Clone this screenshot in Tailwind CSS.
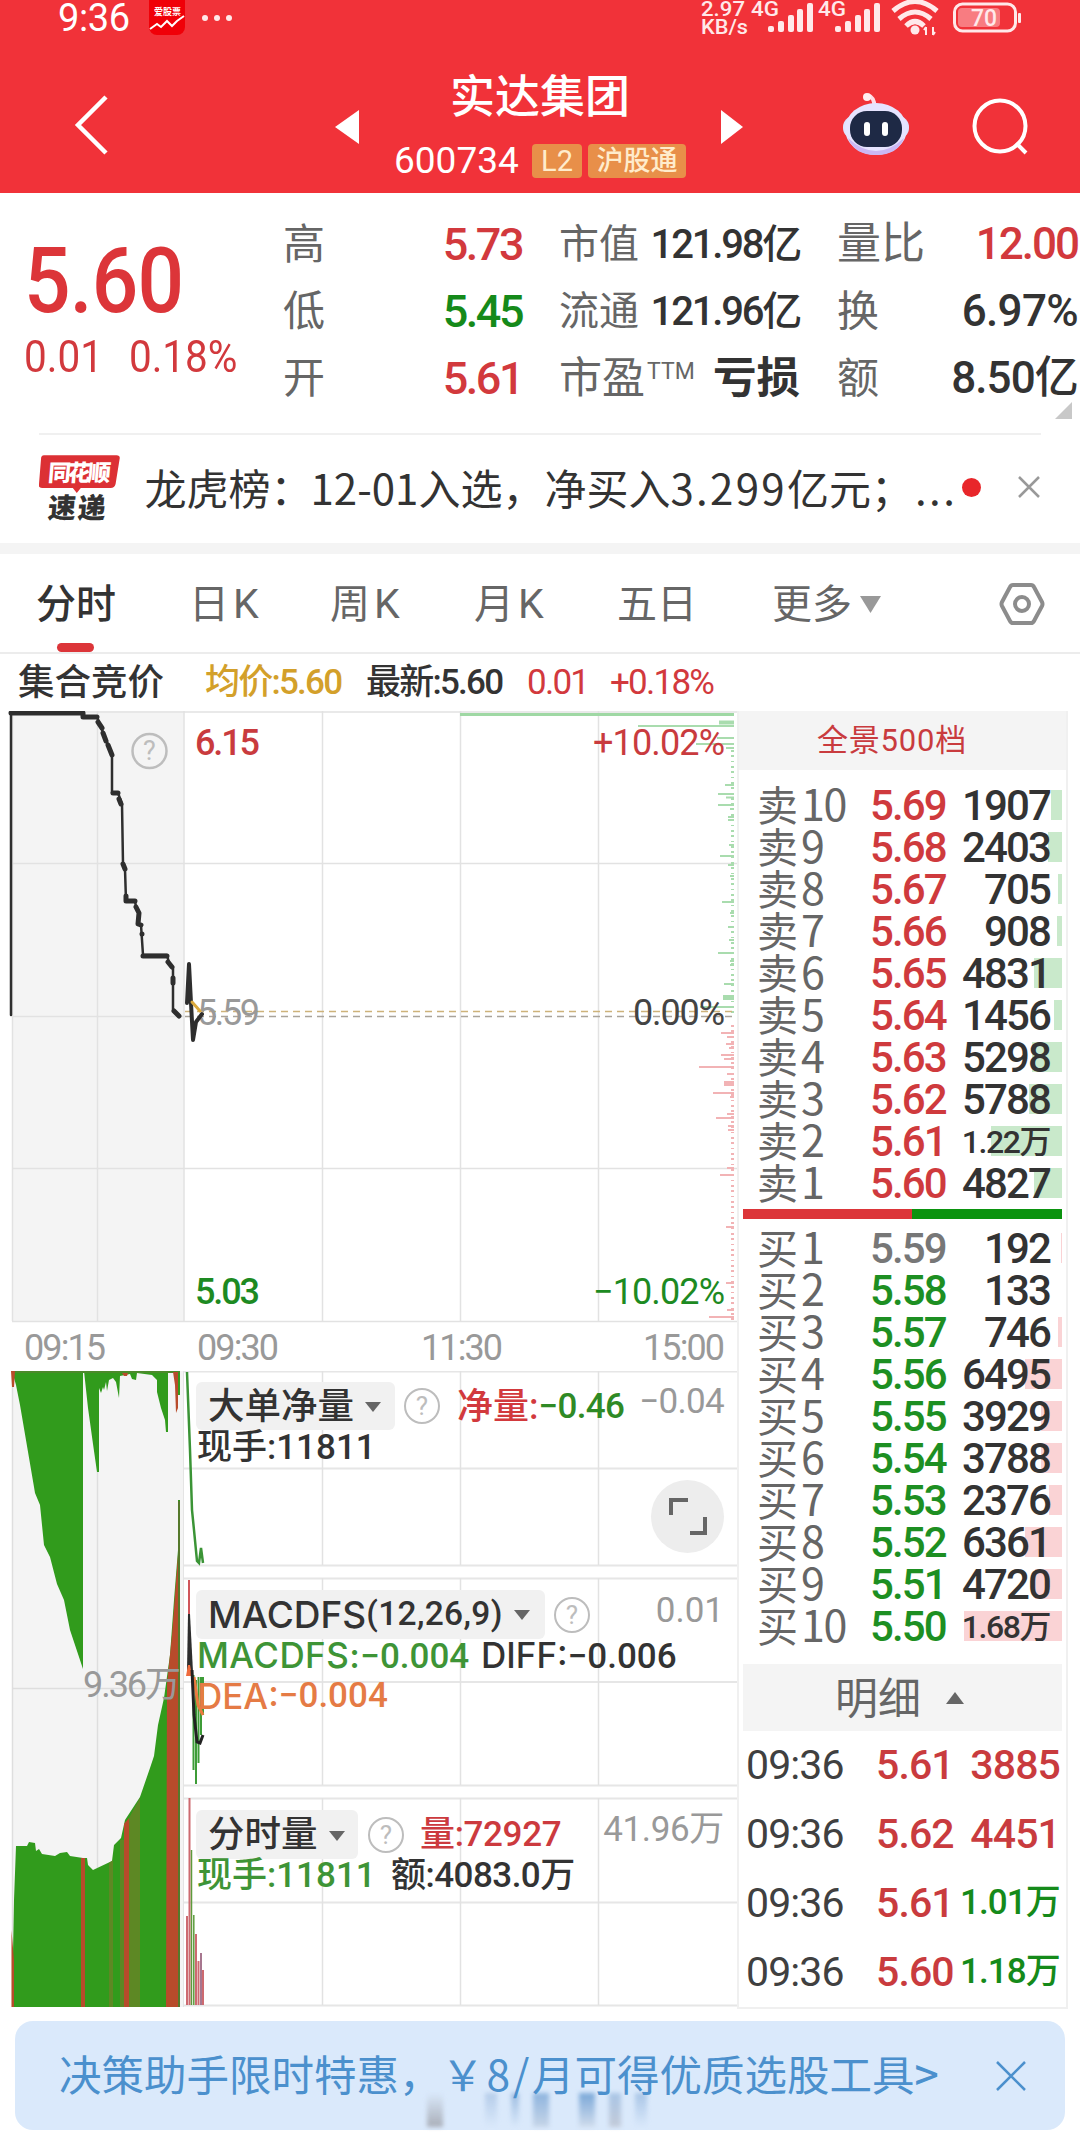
<!DOCTYPE html>
<html lang="zh-CN">
<head>
    <meta charset="UTF-8">
    <meta name="viewport" content="width=device-width, initial-scale=1.0">
    <title>实达集团 600734</title>
    <script src="https://cdn.jsdelivr.net/npm/@tailwindcss/browser@4"></script>
</head>
<body class="w-[1080px] h-[2138px] bg-white text-[#333] overflow-hidden font-['Roboto','Noto_Sans_CJK_SC',sans-serif]">

<!-- Header -->
<header class="h-[193px] bg-[#f13239] text-white">
    <div class="h-9 flex items-center justify-between pl-[58px] pr-[58px]">
        <div class="flex items-center">
            <span class="text-[38px] leading-9 tracking-[-0.01em]">9:36</span>
            <svg class="ml-[19px]" width="36" height="36" viewBox="0 0 36 36">
                <rect y="-8" width="36" height="43" rx="8" fill="#f00008"/>
                <text x="5" y="15" font-size="9" font-weight="700" fill="#fff" textLength="27">爱股票</text>
                <path d="M1 29l7-5 4 3 6-6 5 5 5-5 7-5" fill="none" stroke="#fff" stroke-width="2"/>
            </svg>
            <svg class="ml-4" width="34" height="8"><g fill="#ffe9ea"><circle cx="4" cy="4" r="3"/><circle cx="16" cy="4" r="3"/><circle cx="28" cy="4" r="3"/></g></svg>
        </div>
        <svg width="322" height="36" viewBox="700 0 322 36" fill="#ffe9ea">
            <g font-size="21" font-weight="500">
                <text x="701" y="16" textLength="44" lengthAdjust="spacingAndGlyphs">2.97</text>
                <text x="701" y="34" textLength="47" lengthAdjust="spacingAndGlyphs">KB/s</text>
                <text x="751" y="16" textLength="28" lengthAdjust="spacingAndGlyphs">4G</text>
                <text x="818" y="16" textLength="28" lengthAdjust="spacingAndGlyphs">4G</text>
            </g>
            <g id="bars">
                <rect x="768" y="26" width="6" height="6" rx="2"/><rect x="778" y="21" width="6" height="11" rx="2"/><rect x="788" y="15" width="6" height="17" rx="2"/><rect x="797" y="9" width="6" height="23" rx="2"/><rect x="807" y="3" width="6" height="29" rx="2"/>
            </g>
            <use href="#bars" x="67"/>
            <g fill="none" stroke="#ffe9ea" stroke-width="5">
                <path d="M893 11Q915-8 937 11M899 19Q915 5 931 19M906 26Q915 17 924 26"/>
            </g>
            <circle cx="915" cy="30" r="4.5"/>
            <path d="M926 27v8m0-8l-2 3M933 35v-8m0 8l2-3" stroke="#ffe9ea" stroke-width="2"/>
            <rect x="954.500" y="4" width="61" height="27" rx="8" fill="none" stroke="#ffe9ea" stroke-width="3"/>
            <rect x="958" y="8" width="42" height="19" rx="4" fill="#f87c81"/>
            <rect x="1018" y="13" width="3" height="10" rx="1"/>
            <text x="971" y="26" font-size="24" font-weight="500" textLength="26" lengthAdjust="spacingAndGlyphs">70</text>
        </svg>
    </div>
    <div class="h-[157px] flex items-start relative">
        <svg class="ml-[74px] mt-[59px]" width="36" height="60" fill="none" stroke="#fff" stroke-width="4.500"><path d="M32 2L4 30l28 28"/></svg>
        <svg class="ml-[225px] mt-[73px]" width="24" height="36"><path d="M24 1v34L0 18z" fill="#fff"/></svg>
        <div class="w-[362px] mt-8 flex flex-col items-center">
            <div class="text-[45px] leading-[60px] font-medium">实达集团</div>
            <div class="mt-[15px] flex items-center h-9">
                <span class="text-[37px] leading-9 w-[138px]">600734</span>
                <span class="w-[50px] h-[34px] rounded bg-[#e88f49] text-[#ffeccc] text-[29px] leading-[34px] text-center">L2</span>
                <span class="ml-[6px] w-[98px] h-[34px] rounded bg-[#e88f49] text-[#ffeccc] text-[27px] leading-[34px] text-center font-medium">沪股通</span>
            </div>
        </div>
        <svg class="mt-[73px]" width="24" height="36"><path d="M0 1v34L22 18z" fill="#fff"/></svg>
        <svg class="ml-[97px] mt-14" width="68" height="64" viewBox="0 0 68 64">
            <path d="M32 14q1-8-6-11" fill="none" stroke="#ffdce6" stroke-width="4"/><circle cx="25" cy="5" r="4" fill="#ffeef2"/>
            <rect x="1" y="24" width="66" height="23" rx="11" fill="#dfe3ff"/>
            <ellipse cx="34" cy="37" rx="31" ry="26" fill="#e6e4ff"/>
            <path d="M6 46q28 26 56 0-6 17-28 17T6 46z" fill="#cbb8f4"/>
            <rect x="8" y="19" width="52" height="36" rx="17" fill="#1e2945"/>
            <rect x="22" y="30" width="6" height="14" rx="3" fill="#fff"/><rect x="40" y="30" width="6" height="14" rx="3" fill="#fff"/>
        </svg>
        <svg class="ml-[61px] mt-[61px]" width="60" height="60" fill="none" stroke="#fff" stroke-width="4"><circle cx="29" cy="29" r="25.500"/><path d="M45 46l10 10"/></svg>
    </div>
</header>

<!-- Quote summary -->
<section class="h-[240px] flex relative pt-[18px]">
    <div class="w-[283px] pl-[24px] text-[#dc3539]">
        <div class="mt-[20px] w-[190px] text-[91px] leading-[100px] font-medium tracking-[-0.01em] origin-left scale-x-[0.9]">5.60</div>
        <div class="w-[250px] flex text-[44px] leading-[52px] text-[#d2393d] origin-left scale-x-[0.92]"><span class="w-[114px]">0.01</span><span>0.18%</span></div>
    </div>
    <div class="w-[239px] text-[45px] leading-[67px] font-medium tracking-[-0.055em]">
        <div class="flex justify-between"><span class="text-[42px] font-normal text-[#666]">高</span><span class="text-[#d2393d]">5.73</span></div>
        <div class="flex justify-between"><span class="text-[42px] font-normal text-[#666]">低</span><span class="text-[#158a1a]">5.45</span></div>
        <div class="flex justify-between"><span class="text-[42px] font-normal text-[#666]">开</span><span class="text-[#d2393d]">5.61</span></div>
    </div>
    <div class="ml-[37px] w-[241px] text-[40px] leading-[67px] tracking-[-0.055em]">
        <div class="flex justify-between"><span class="text-[#666] tracking-normal">市值</span><span class="font-medium">121.98亿</span></div>
        <div class="flex justify-between"><span class="text-[#666] tracking-normal">流通</span><span class="font-medium">121.96亿</span></div>
        <div class="flex justify-between tracking-normal"><span class="flex text-[#666] text-[43px]">市盈<span class="text-[23px] leading-[54px] ml-[2px]">TTM</span></span><span class="text-[43.5px] font-bold">亏损</span></div>
    </div>
    <div class="ml-[37px] w-[241px] text-[44px] leading-[67px] tracking-[-0.035em]">
        <div class="flex justify-between"><span class="text-[#666] tracking-normal">量比</span><span class="font-medium text-[#d2393d] tracking-[-0.045em]">12.00</span></div>
        <div class="flex justify-between"><span class="text-[#666] text-[42px]">换</span><span class="font-medium tracking-[-0.015em]">6.97%</span></div>
        <div class="flex justify-between"><span class="text-[#666] text-[42px]">额</span><span class="font-medium tracking-[-0.02em]">8.50亿</span></div>
    </div>
    <svg class="absolute right-2 bottom-[14px]" width="17" height="17"><path d="M17 0v17H0z" fill="#c8c8c8"/></svg>
</section>

<!-- News strip -->
<section class="mx-[39px] h-[110px] border-t-2 border-[#f0f0f0] flex items-center">
    <svg class="-mt-[3px]" width="84" height="72" viewBox="0 0 84 72">
        <path d="M5 3h73q4 0 3 4l-4 25q-1 4-5 4H42l-4 5-4-5H3q-4 0-3-4L2 7q0-4 3-4z" fill="#dc3034"/>
        <text x="11" y="29" font-size="23" font-weight="900" fill="#fff" textLength="63" transform="skewX(-5)">同花顺</text>
        <text x="14" y="66" font-size="28" font-weight="900" fill="#333" textLength="58" transform="skewX(-5)">速递</text>
    </svg>
    <span class="ml-[22px] -mt-1 w-[819px] text-[42px] leading-[60px] whitespace-nowrap font-['Noto_Sans_CJK_SC',sans-serif]">龙虎榜：<span class="-ml-[2px]">12-01</span>入选，净买入<span class="tracking-[0.055em]">3.299</span>亿元；<span class="ml-[2px] tracking-[0.06em]">...</span></span>
    <span class="w-[19px] h-[19px] rounded-full bg-[#e8262a] shrink-0 ml-[3px] -mt-1"></span>
    <svg class="ml-9 -mt-1" width="24" height="24" stroke="#999" stroke-width="2.5"><path d="M2 2l20 20M22 2L2 22"/></svg>
</section>
<div class="h-[11px] bg-[#f4f4f4]"></div>

<!-- Period tabs -->
<nav class="h-[100px] border-b-2 border-[#ececec] flex text-[40px] leading-[101px] text-[#666] relative">
    <span class="pl-[36px] w-[189px] text-[#333] font-medium">分时</span>
    <span class="w-[141px]">日<span class="ml-1 text-[41px]">K</span></span>
    <span class="w-[144px]">周<span class="ml-1 text-[41px]">K</span></span>
    <span class="w-[143px]">月<span class="ml-1 text-[41px]">K</span></span>
    <span class="w-[155px]">五日</span>
    <span class="w-[88px]">更多</span>
    <svg class="mt-[42px]" width="21" height="17"><path d="M0 0h21L10.500 17z" fill="#999"/></svg>
    <svg class="ml-[118px] mt-[28px]" width="46" height="44" viewBox="0 0 46 44" fill="none" stroke="#8c8c8c" stroke-width="4"><path d="M14 3h18q2 0 3 2l8 15q1 2 0 4l-8 15q-1 2-3 2H14q-2 0-3-2L3 24q-1-2 0-4l8-15q1-2 3-2z" stroke-linejoin="round"/><circle cx="23" cy="22" r="7"/></svg>
    <span class="absolute left-[57px] bottom-0 w-[37px] h-[9px] rounded-full bg-[#dc3539]"></span>
</nav>

<!-- Price line -->
<div class="h-[57px] flex items-center text-[35px] leading-[61px] tracking-[-0.05em]">
    <span class="ml-[18px] w-[187px] text-[36.500px] tracking-normal font-medium">集合竞价</span>
    <span class="w-[161px] text-[#d3a02a] font-medium">均价:5.60</span>
    <span class="w-[161px] font-medium">最新:5.60</span>
    <span class="w-[83px] text-[#d2393d]">0.01</span>
    <span class="text-[#d2393d]">+0.18%</span>
</div>

<main class="flex h-[1300px]">
    <!-- Charts -->
    <div class="w-[737px]">
        <svg class="block" width="737" height="660" viewBox="0 711 737 660">
            <rect x="12" y="711" width="172" height="611" fill="#f4f4f4"/>
            <g stroke="#e2e2e2" stroke-width="1.5" fill="none">
                <path d="M12 712H737M12 863.500H737M12 1016.500H184M12 1168.500H737M12 1321.500H737M12.500 711V1321M97.500 711V1321M184 711V1321M322.500 711V1321M460.500 711V1321M598.500 711V1321"/>
            </g>
            <!-- chip distribution -->
            <g stroke="#a9dcae" stroke-width="2">
                <path d="M460 714.500H734" stroke="#9fd8a4" stroke-width="3"/>
                <path d="M719 722.500H734" stroke-width="4"/>
                <path d="M638 726H734M717 738H734M696 744H734M726 748H734M725 785H734M718 794H734M726 797.500H734M718 805H734M730 809H734M728 817H734M728 820H734M729 845H734M720 856H734M728 865H734M730 876H734M722 902H734M730 913H734M728 927H734M729 940H734M718 953H734M730 961H734M730 965H734M724 984H734M700 1007H734"/>
                <path d="M723 997.500H734" stroke-width="5"/>
                <path d="M732.500 750V1014" stroke-width="3" stroke-dasharray="2 3 2 4 1 4"/>
            </g>
            <g stroke="#f2b3b5" stroke-width="2">
                <path d="M721 1033H734M727 1037H734M726 1044H734M729 1048H734M721 1055H734M724 1059H734M699 1067H734M727 1074H734M713 1093H734M730 1097H734M716 1118H734M727 1114H734M728 1126H734M728 1130H734M727 1168H734M720 1175H734M726 1227H734M726 1283H734M727 1310H734M709 1317H734"/>
                <path d="M724 1083.500H734" stroke-width="5"/>
                <path d="M732.500 1025V1320" stroke-width="3" stroke-dasharray="2 3 2 4 1 4"/>
            </g>
            <path d="M185 1011.500H735" stroke="#cdb27a" stroke-width="1.500" stroke-dasharray="7 5"/>
            <path d="M185 1016.500H735" stroke="#a9a39a" stroke-width="1.500" stroke-dasharray="7 5"/>
            <g font-size="36">
                <text x="195" y="755" textLength="65" fill="#c93b3e" font-weight="500">6.15</text>
                <text x="197" y="1025" textLength="63" fill="#999">5.59</text>
                <text x="195" y="1304" textLength="65" fill="#1d8a22" font-weight="500">5.03</text>
                <text x="593" y="755" textLength="132" fill="#c93b3e">+10.02%</text>
                <text x="633" y="1025" textLength="92" fill="#444">0.00%</text>
                <text x="593" y="1304" textLength="132" fill="#1d8a22">−10.02%</text>
                <g fill="#999">
                    <text x="24" y="1360" textLength="82">09:15</text>
                    <text x="197" y="1360" textLength="82">09:30</text>
                    <text x="421" y="1360" textLength="82">11:30</text>
                    <text x="643" y="1360" textLength="82">15:00</text>
                </g>
            </g>
            <circle cx="149.500" cy="751" r="17" fill="none" stroke="#bdbdbd" stroke-width="2.500"/>
            <text x="149.500" y="760" font-size="27" fill="#bdbdbd" text-anchor="middle">?</text>
            <!-- auction + intraday price -->
            <g fill="none" stroke="#2e2e2e" stroke-linejoin="round" stroke-linecap="round">
                <path d="M11 1015V713H83V717H97L112 755V793H118L122 804 123 864 125 869 126 901H135L136 907 139 914 138 923 141 925 143 955H167L169 963 173 968V1010L178 1016" stroke-width="2.500"/>
                <path d="M11 713H83V717H97M98 722L102 728M103 733L106 741M108 745L112 755M113 793H118M119 799L121 804M123 864l2 5M126 896v5H135M136 907L139 913 138 924 141 925M142 934v0M143 956H167M168 962L172 967M173 978v5M174 1011L179 1016" stroke-width="5"/>
                <path d="M187 1003L189 964 191 1003 193 1040 196 1022 202 1014" stroke-width="4"/>
                <path d="M192 1002L200 1011" stroke="#dba93c" stroke-width="3"/>
            </g>
        </svg>

        <div class="flex h-[640px] relative">
            <svg class="shrink-0" width="184" height="640" viewBox="0 1371 184 640">
                <rect x="12" y="1371" width="172" height="636" fill="#f4f4f4"/>
                <path d="M12.500 1371V2007M97.500 1371V2007M12 1688.500H184M184 1371V2007" stroke="#dedede" stroke-width="1.500"/>
                <g fill="#319b1c">
                    <path d="M12 1371L16 1385 20 1405 34 1487 35 1493 40 1505 44 1545 50 1557 57 1584 64 1600 70 1630 83 1669V1371zM84 1371L88 1408 93 1444 97 1472H99V1371z"/>
                    <path d="M99 1371V1388L101 1393 103 1387 104 1390 106 1382 107 1391 109 1380 113 1378 116 1382 119 1398 120 1376 130 1374 132 1379 136 1380 137 1373 152 1375 157 1380V1392L161 1408 165 1420 166 1432H168V1372H180V1395H178V1371z"/>
                    <path d="M12 2007L14 1900 16 1846 27 1846 29 1842 35 1843 36 1851 39 1849 42 1854 55 1856 60 1853 67 1852 70 1856 83 1858 87 1858 88 1865 93 1870 112 1861 114 1845 121 1838 125 1820 140 1797 150 1768 154 1756 158 1725 164 1698 170 1655 174 1600 178 1550V1500H180V2007z"/>
                </g>
                <path d="M12 1372H180" stroke="#4b8a2a" stroke-width="2"/>
                <g fill="#b84b2b">
                    <path d="M11 1371H15L14 1387H12zM173 1372H178V1408L176 1413 175 1385zM122 1373h6l-1 3h-3zM11.500 2007V1930L14 1960V2007z"/>
                    <path d="M81 1858h4V2007h-4zM124 1824l5-6V2007h-5zM167 1684L172 1635 178 1555V2007H169L166 2007z"/>
                </g>
                <path d="M109 1863l4-3V2007h-4zM129 1818l11-20V2007h-11zM120 1840h4V2007h-4z" fill="#5d8824"/>
                <path d="M179 1501V2007" stroke="#55792b" stroke-width="2"/>
                <text x="83" y="1697" font-size="36" fill="#999" textLength="98">9.36万</text>
            </svg>

            <!-- grid and traces of the three indicator panels -->
            <svg class="absolute left-[184px] top-0" width="553" height="640" viewBox="184 1371 553 640" fill="none">
                <path d="M184 1371.500H737M184 1468.500H737M184 1565.500H737M184 1578.500H737M184 1682H737M184 1785.500H737M184 1798.500H737M184 1902.500H737M184 2005.500H737" stroke="#e6e6e6" stroke-width="2"/>
                <path d="M322.500 1371V1565M460.500 1371V1565M598.500 1371V1565M322.500 1578V1785M460.500 1578V1785M598.500 1578V1785M322.500 1798V2005M460.500 1798V2005M598.500 1798V2005" stroke="#e2e2e2" stroke-width="1.500"/>
                <path d="M187 1372L190 1450 192 1510 194 1530 197 1561 199 1563 201 1548 203 1563" stroke="#3b9436" stroke-width="2.500"/>
                <path d="M189 1580V1615" stroke="#d0555a" stroke-width="2"/>
                <path d="M187 1670L188 1614H190L193 1672z" fill="#2e2e2e"/>
                <path d="M193.500 1675V1770M196 1680V1784M198.500 1677V1763M201 1677V1735M203 1677V1715" stroke="#3d9c37" stroke-width="2"/>
                <path d="M186 1676L188 1665 190 1665 192 1676z" fill="#ef6b3d"/>
                <path d="M194 1677L198 1705 203 1715" stroke="#ec7a3f" stroke-width="3"/>
                <path d="M192 1670L194 1715 197 1742 200 1743 203 1735" stroke="#222" stroke-width="3"/>
                <path d="M187 1916V2005M189.500 1798V2005M196 1934V2005M198.500 1961V2005M203 1970V2005" stroke="#cd6a70" stroke-width="2"/>
                <path d="M191.500 1850V2005M193.800 1915V2005" stroke="#5d9b3c" stroke-width="1.500"/>
                <path d="M201 1953V2005" stroke="#8a4a6a" stroke-width="1.500"/>
            </svg>

            <div class="relative w-[553px] pl-3 pr-[13px] text-[35px]">
                <div class="h-[207px] pt-[11px]">
                    <div class="h-12 flex items-center">
                        <span class="w-[199px] h-12 pl-[12px] pt-[2px] rounded-md bg-[#f1f1f1] flex items-center text-[36.500px] font-medium">大单净量<i class="ml-[11px] border-x-8 border-t-[10px] border-x-transparent border-t-[#666]"></i></span>
                        <span class="ml-[9px] w-9 h-9 rounded-full border-[2.5px] border-[#bdbdbd] text-[#bdbdbd] text-[26px] leading-[32px] text-center">?</span>
                        <span class="ml-[17px] pt-[2px] text-[36px] font-medium text-[#d2393d]">净量:</span>
                        <span class="font-medium tracking-[-0.02em] pt-[2px] text-[#2f8a25]">−0.46</span>
                        <span class="ml-auto text-[#999] tracking-[-0.02em] -mt-2">−0.04</span>
                    </div>
                    <div class="pl-[1px] h-9 flex items-center font-medium">现手:11811</div>
                    <div class="ml-auto mt-[14px] w-[73px] h-[73px] rounded-full bg-[#ededed] flex items-center justify-center">
                        <svg width="40" height="40" fill="none" stroke="#666" stroke-width="4"><path d="M3 18V3h17M22 36h15V20"/></svg>
                    </div>
                </div>
                <div class="h-[220px] pt-3">
                    <div class="h-[49px] flex items-center">
                        <span class="w-[349px] h-[49px] pl-[12px] rounded-md bg-[#f1f1f1] flex items-center font-medium whitespace-nowrap"><span class="font-['Inter'] text-[37px]">MACDFS</span><span class="text-[33.500px] tracking-[0.01em]">(12,26,9)</span><i class="ml-[11px] border-x-8 border-t-[10px] border-x-transparent border-t-[#666]"></i></span>
                        <span class="ml-[9px] w-9 h-9 rounded-full border-[2.5px] border-[#bdbdbd] text-[#bdbdbd] text-[26px] leading-[32px] text-center">?</span>
                        <span class="ml-auto text-[#999] -mt-[6px]">0.01</span>
                    </div>
                    <div class="pl-[1px] h-[34px] flex items-center font-medium whitespace-nowrap">
                        <span class="w-[284px] text-[#3e9436]"><span class="font-['Inter'] tracking-[0.012em]">MACDFS:</span>−0.004</span>
                        <span><span class="font-['Inter']">DIFF:</span>−0.006</span>
                    </div>
                    <div class="pl-[1px] h-[46px] flex items-center font-medium text-[#e57b45]"><span class="font-['Inter']">DEA:</span>−0.004</div>
                </div>
                <div class="pt-3">
                    <div class="h-[49px] flex items-center">
                        <span class="w-[162px] h-[49px] pl-[12px] pt-[2px] rounded-md bg-[#f1f1f1] flex items-center text-[36.500px] font-medium">分时量<i class="ml-[11px] border-x-8 border-t-[10px] border-x-transparent border-t-[#666]"></i></span>
                        <span class="ml-[10px] w-9 h-9 rounded-full border-[2.5px] border-[#bdbdbd] text-[#bdbdbd] text-[26px] leading-[32px] text-center">?</span>
                        <span class="ml-[16px] pt-[2px] tracking-[-0.01em] font-medium text-[#cc3a3e]">量:72927</span>
                        <span class="ml-auto text-[#999] tracking-[-0.01em] -mt-2">41.96万</span>
                    </div>
                    <div class="pl-[1px] h-[34px] flex items-center font-medium"><span class="w-[194px] text-[#3e9436]">现手:11811</span><span class="tracking-[-0.015em]">额:4083.0万</span></div>
                </div>
            </div>
        </div>
    </div>

    <!-- Order book -->
    <aside class="w-[331px] h-[1298px] border-2 border-t-0 border-[#f0f0f0]">
        <div class="h-[59px] mb-[15px] bg-[#f4f4f4] text-[#c93b3e] text-[31px] leading-[60px] pl-[78px] tracking-[0.025em]">全景500档</div>
        <div id="asks"></div>
        <div class="mt-[4px] ml-1 mr-1 h-[10px] flex"><div class="w-[169px] bg-[#dc3539]"></div><div class="flex-1 bg-[#0b930f]"></div></div>
        <div id="bids" class="mt-[9px]"></div>
        <div class="mt-[16px] ml-1 mr-1 h-[67px] bg-[#f4f4f4] text-[#666] text-[43px] leading-[67px] flex items-center pl-[92px]"><span class="mt-1">明细</span><i class="ml-[25px] border-x-[9px] border-b-[12px] border-x-transparent border-b-[#666]"></i></div>
        <div id="trades"></div>
    </aside>
</main>

<!-- Promo banner -->
<footer class="mt-[10px] mx-[15px] h-[109px] rounded-[18px] bg-[#dae9fb] text-[#4b90cd] flex items-center relative">
    <span class="relative z-10 pl-[44px] -mt-[5px] w-[980px] text-[42.500px] whitespace-nowrap font-['Noto_Sans_CJK_SC',sans-serif]">决策助手限时特惠，<span class="tracking-[0.06em]">￥8/</span>月可得优质选股工具<span class="font-medium">&gt;</span></span>
    <svg width="32" height="32" stroke="#4b90cd" stroke-width="2.500"><path d="M2 2l28 28M30 2L2 30"/></svg>
    <div class="absolute left-[412px] top-[72px] flex gap-[14px] h-[34px] blur-[2px]">
        <i class="w-4 bg-linear-to-b from-transparent to-[#a9aeb8]"></i>
        <i class="w-3 ml-7 bg-linear-to-b from-[#b5cce9] to-transparent"></i>
        <i class="w-2 bg-linear-to-b from-[#9dbce0] to-transparent"></i>
        <i class="w-4 bg-linear-to-b from-[#8eb4de] to-[#c6d5e8]"></i>
        <i class="w-4 ml-4 bg-linear-to-b from-[#7ba8d8] to-[#d0dcec]"></i>
        <i class="w-3 bg-linear-to-b from-[#a9c5e6] to-[#c3cbd9]"></i>
        <i class="w-3 bg-linear-to-b from-[#a9c5e6] to-transparent"></i>
    </div>
</footer>

<script>
// label, price, volume, bar width
const asks = [
    ['10', '5.69', '1907', 11], ['9', '5.68', '2403', 14], ['8', '5.67', '705', 4], ['7', '5.66', '908', 5], ['6', '5.65', '4831', 28],
    ['5', '5.64', '1456', 8], ['4', '5.63', '5298', 30], ['3', '5.62', '5788', 33], ['2', '5.61', '1.22万', 71], ['1', '5.60', '4827', 28],
];
const bids = [
    ['1', '5.59', '192', 1], ['2', '5.58', '133', 0], ['3', '5.57', '746', 4], ['4', '5.56', '6495', 37], ['5', '5.55', '3929', 21],
    ['6', '5.54', '3788', 21], ['7', '5.53', '2376', 13], ['8', '5.52', '6361', 37], ['9', '5.51', '4720', 27], ['10', '5.50', '1.68万', 98],
];
const trades = [['5.61', '3885', 'text-[#c93b3e]'], ['5.62', '4451', 'text-[#c93b3e]'], ['5.61', '1.01万', 'text-[#158a1a]'], ['5.60', '1.18万', 'text-[#158a1a]']];

function volClass(v) {
    return v.includes('万') ? 'text-[32px]' : 'text-[42px]';
}

function bookRows(rows, side, bar) {
    return rows.map(([n, price, vol, w]) => {
        const color = side === '卖' ? 'text-[#cf3a3d]' : price === '5.59' ? 'text-[#777]' : 'text-[#1d8f22]';
        return `<div class="relative h-[42px] flex leading-[42px] pl-[18px]">
            <div class="absolute right-1 top-[5px] h-[30px] ${bar}" style="width:${w}px"></div>
            <span class="relative -mt-[4px] w-[113px] text-[41px] text-[#666] whitespace-nowrap">${side}<span class="ml-[3px] font-['Noto_Sans_CJK_SC'] text-[43px] tracking-[-0.03em]">${n}</span></span>
            <span class="relative text-[42px] font-medium tracking-[-0.045em] ${color}">${price}</span>
            <span class="relative ml-auto mr-[16px] font-medium tracking-[-0.045em] ${volClass(vol)}">${vol}</span>
        </div>`;
    }).join('');
}

document.getElementById('asks').innerHTML = bookRows(asks, '卖', 'bg-[#c9e9cb]');
document.getElementById('bids').innerHTML = bookRows(bids, '买', 'bg-[#fad3d5]');
document.getElementById('trades').innerHTML = trades.map(([price, vol, color]) => `
    <div class="h-[69px] flex items-center pl-[7px] pr-[6px] font-medium tracking-[-0.055em]">
        <span class="w-[130px] text-[41px] font-normal text-[#404040]">09:36</span>
        <span class="text-[41px] text-[#c93b3e]">${price}</span>
        <span class="ml-auto ${vol.includes('万') ? 'text-[35px]' : 'text-[41px]'} ${color}">${vol}</span>
    </div>`).join('');
</script>
</body>
</html>
